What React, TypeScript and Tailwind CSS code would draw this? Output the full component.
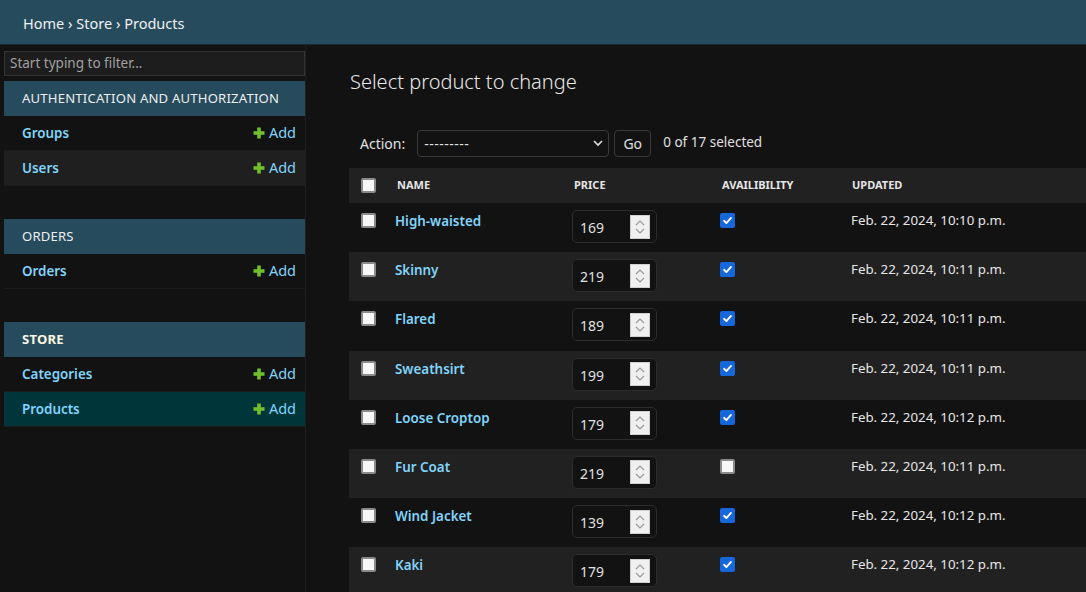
import React from "react";

const FONT = { fontFamily: '"Noto Sans", "Open Sans", Arial, sans-serif' };

type Row = { name: string; price: number; avail: boolean; updated: string };

const rows: Row[] = [
  { name: "High-waisted", price: 169, avail: true, updated: "Feb. 22, 2024, 10:10 p.m." },
  { name: "Skinny", price: 219, avail: true, updated: "Feb. 22, 2024, 10:11 p.m." },
  { name: "Flared", price: 189, avail: true, updated: "Feb. 22, 2024, 10:11 p.m." },
  { name: "Sweathsirt", price: 199, avail: true, updated: "Feb. 22, 2024, 10:11 p.m." },
  { name: "Loose Croptop", price: 179, avail: true, updated: "Feb. 22, 2024, 10:12 p.m." },
  { name: "Fur Coat", price: 219, avail: false, updated: "Feb. 22, 2024, 10:11 p.m." },
  { name: "Wind Jacket", price: 139, avail: true, updated: "Feb. 22, 2024, 10:12 p.m." },
  { name: "Kaki", price: 179, avail: true, updated: "Feb. 22, 2024, 10:12 p.m." },
];

function Box({ checked }: { checked?: boolean }) {
  if (checked) {
    return (
      <div className="w-[15px] h-[15px] rounded-[2px] bg-[#1666dc] flex items-center justify-center">
        <svg width="11" height="11" viewBox="0 0 12 12">
          <path d="M2.2 6.3 L4.8 8.8 L9.8 3.2" fill="none" stroke="#ffffff" strokeWidth="2" strokeLinecap="round" strokeLinejoin="round" />
        </svg>
      </div>
    );
  }
  return <div className="w-[15px] h-[15px] rounded-[2px] bg-[#f7f7f7] border-2 border-[#8a8a8a]" />;
}

function Plus() {
  return (
    <svg width="12" height="12" viewBox="0 0 12 12" className="mr-[4px]">
      <rect x="4.2" y="0.5" width="3.6" height="11" fill="#70bf2b" />
      <rect x="0.5" y="4.2" width="11" height="3.6" fill="#70bf2b" />
    </svg>
  );
}

function ModelRow({ label, bg }: { label: string; bg: string }) {
  return (
    <div className={`h-[35px] flex items-center justify-between pl-[18px] pr-[9px] border-b border-[#1c1c1c] ${bg}`}>
      <span className="text-[13.4px] font-semibold text-[#81d4fa]">{label}</span>
      <span className="flex items-center text-[14.5px] text-[#81d4fa]">
        <Plus />
        Add
      </span>
    </div>
  );
}

function Caption({ label, bold }: { label: string; bold?: boolean }) {
  return (
    <div className="h-[35px] flex items-center pl-[18px] bg-[#264b5d]">
      <span className={`text-[13.1px] tracking-[0.2px] ${bold ? "font-bold text-[#fbf7e0]" : "text-[#eeeeee]"}`}>{label}</span>
    </div>
  );
}

function Spinner() {
  return (
    <div className="w-[20px] h-[24px] bg-[#f0f0f0] border border-[#d0d0d0] flex flex-col items-center justify-center gap-[2px]">
      <svg width="10" height="6" viewBox="0 0 10 6">
        <path d="M1 5 L5 1 L9 5" fill="none" stroke="#9a9a9a" strokeWidth="1.2" />
      </svg>
      <svg width="10" height="6" viewBox="0 0 10 6">
        <path d="M1 1 L5 5 L9 1" fill="none" stroke="#9a9a9a" strokeWidth="1.2" />
      </svg>
    </div>
  );
}

export default function App() {
  return (
    <div className="w-[1086px] h-[592px] overflow-hidden bg-[#121212] text-[#e0e0e0] flex flex-col" style={FONT}>
      <div className="h-[45px] shrink-0 bg-[#264b5d] border-b border-[#1a2a33] flex items-center pl-[23px] pt-[3px]">
        <span className="text-[14.5px] text-[#f0f0f0]">Home › Store › Products</span>
      </div>
      <div className="flex flex-1 min-h-0">
        <div className="w-[306px] shrink-0 pl-[4px] pt-[6px] border-r border-[#1f1f1f] bg-[#121212]">
          <div className="h-[25px] bg-[#1d1d1d] border border-[#333333] flex items-center pl-[5px]">
            <span className="text-[13.5px] text-[#a0a0a0]">Start typing to filter...</span>
          </div>
          <div className="mt-[5px]">
            <Caption label="AUTHENTICATION AND AUTHORIZATION" />
            <ModelRow label="Groups" bg="bg-[#121212]" />
            <ModelRow label="Users" bg="bg-[#1f1f1f]" />
          </div>
          <div className="mt-[33px]">
            <Caption label="ORDERS" />
            <ModelRow label="Orders" bg="bg-[#121212]" />
          </div>
          <div className="mt-[33px]">
            <Caption label="STORE" bold />
            <ModelRow label="Categories" bg="bg-[#121212]" />
            <ModelRow label="Products" bg="bg-[#00363a]" />
          </div>
        </div>
        <div className="flex-1 min-w-0 pl-[43px] pt-[21px]">
          <h1 className="text-[20px] font-light text-[#e8e8e8] leading-[32px] ml-[1px]">Select product to change</h1>
          <div className="mt-[31px] flex items-center h-[28px] pl-[11px]">
            <span className="text-[14px] mr-[12px]">Action:</span>
            <div className="w-[192px] h-[27px] rounded-[4px] border border-[#3a3a3a] bg-[#121212] flex items-center justify-between pl-[6px] pr-[4px]">
              <span className="text-[14px] tracking-[0.5px]">---------</span>
              <svg width="12" height="12" viewBox="0 0 12 12">
                <path d="M2 4 L6 8 L10 4" fill="none" stroke="#e0e0e0" strokeWidth="1.6" />
              </svg>
            </div>
            <div className="ml-[5px] w-[37px] h-[27px] rounded-[4px] border border-[#3a3a3a] flex items-center justify-center text-[14px]">Go</div>
            <span className="ml-[12px] text-[13.5px] -mt-[2px]">0 of 17 selected</span>
          </div>
          <div className="mt-[11px]">
            <div className="h-[35px] bg-[#212121] flex items-center text-[11px] font-bold text-[#e6e6e6]">
              <div className="w-[48px] pl-[12px] flex">
                <Box />
              </div>
              <div className="w-[177px]">NAME</div>
              <div className="w-[148px]">PRICE</div>
              <div className="w-[130px]">AVAILIBILITY</div>
              <div>UPDATED</div>
            </div>
            {rows.map((r, i) => (
              <div key={r.name} className={`h-[49.2px] flex items-start ${i % 2 === 1 ? "bg-[#212121]" : "bg-[#121212]"}`}>
                <div className="w-[46px] pl-[12px] pt-[10px] flex">
                  <Box />
                </div>
                <div className="w-[177px] pt-[8px] text-[13.4px] font-semibold text-[#81d4fa]">{r.name}</div>
                <div className="w-[148px] pt-[7px]">
                  <div className="w-[85px] h-[33px] rounded-[5px] border border-[#2c2c2c] bg-[#121212] flex items-center justify-between pl-[7px] pr-[6px]">
                    <span className="text-[14px] mt-[2px]">{r.price}</span>
                    <Spinner />
                  </div>
                </div>
                <div className="w-[131px] pt-[10px] flex">
                  <Box checked={r.avail} />
                </div>
                <div className="pt-[8px] text-[13.3px] text-[#e6e6e6]">{r.updated}</div>
              </div>
            ))}
          </div>
        </div>
      </div>
    </div>
  );
}
